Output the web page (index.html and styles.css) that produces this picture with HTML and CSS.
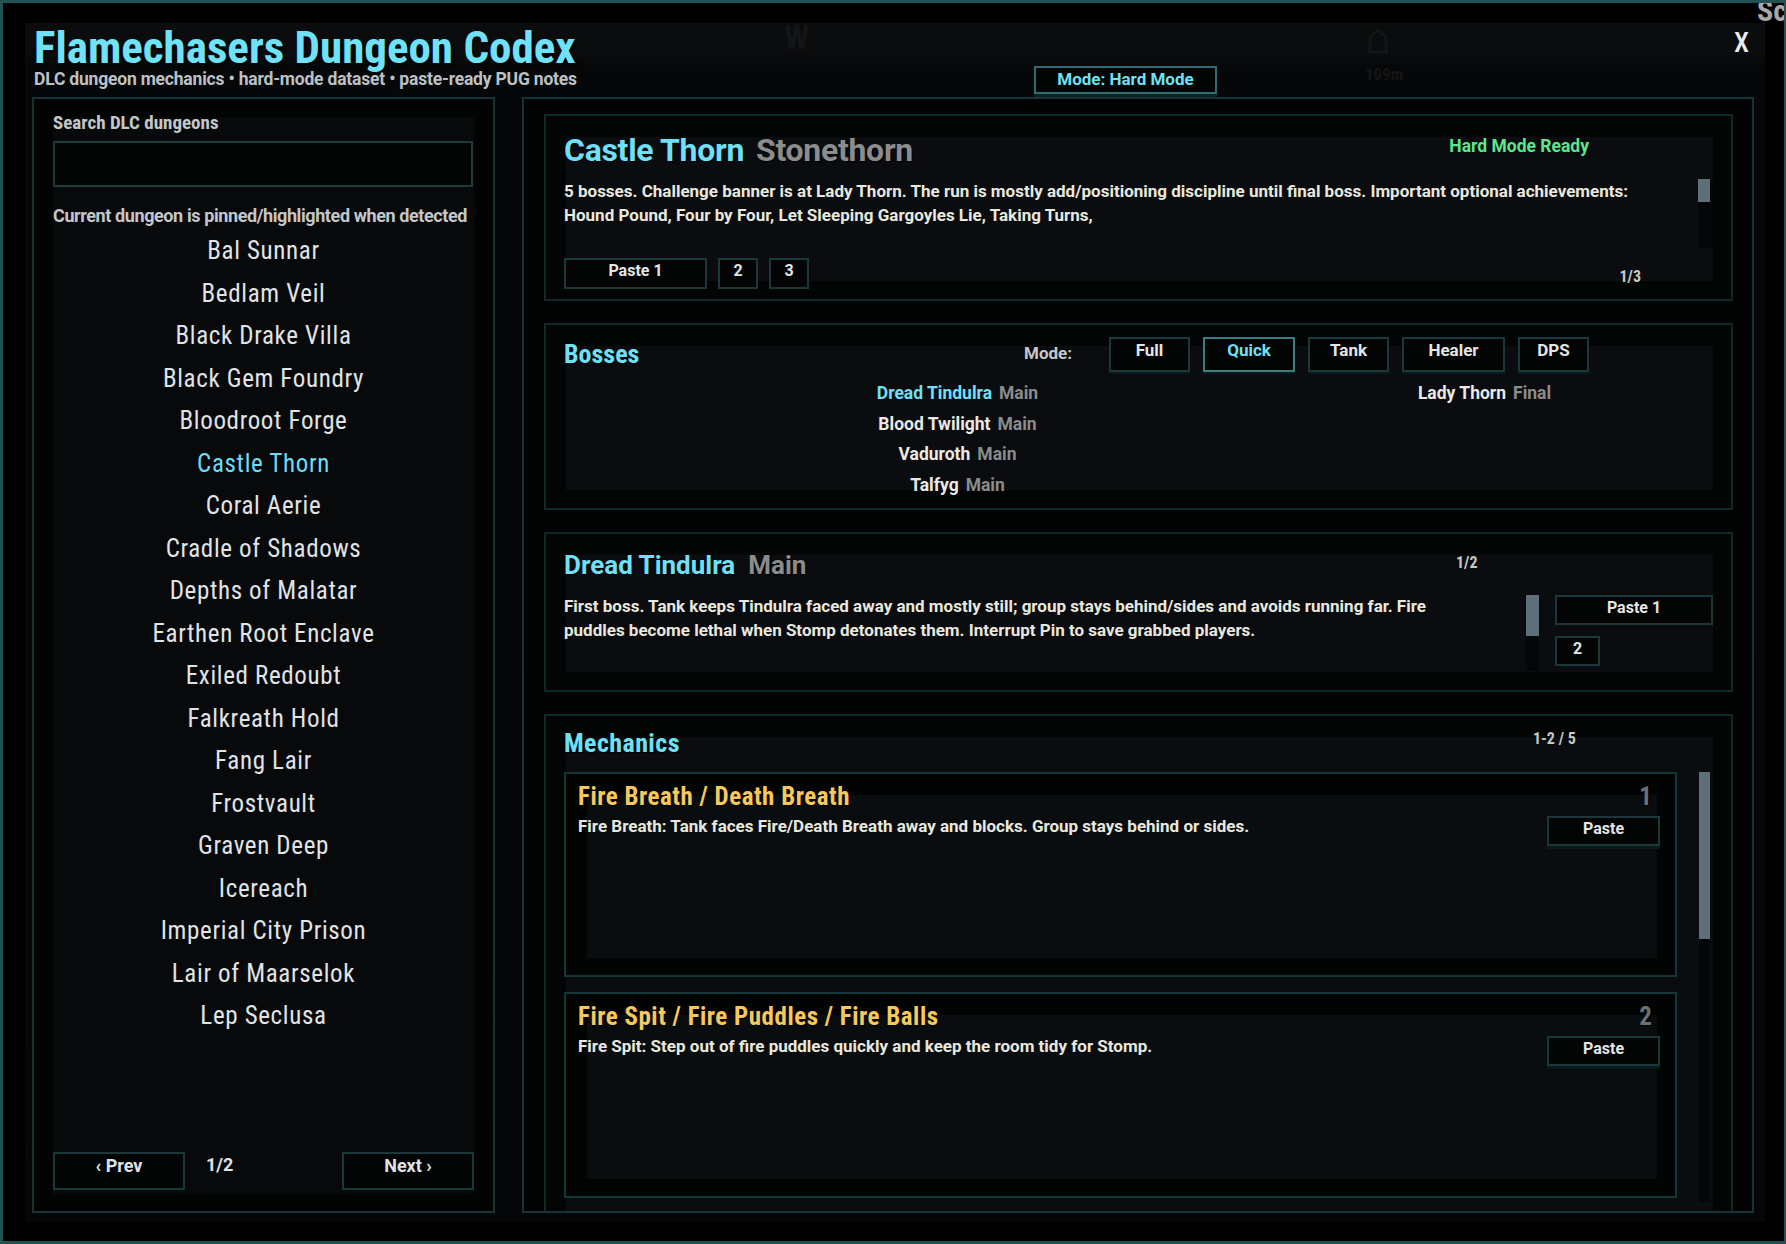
FILE: index.html
```html
<!DOCTYPE html>
<html lang="en">
<head>
<meta charset="utf-8">
<title>Flamechasers Dungeon Codex</title>
<link rel="stylesheet" href="styles.css">
</head>
<body>
<div class="window">
  <span class="corner-tag">Sc</span>
  <div class="frame">
    <span class="ghost ghost-w">W</span>
    <span class="ghost ghost-icon"><svg width="22" height="26" viewBox="0 0 22 26"><path d="M3 24V9l8-7 8 7v15z" fill="none" stroke="#131517" stroke-width="3"/></svg></span>
    <span class="ghost ghost-dist">109m</span>
    <header class="header">
      <div class="title-block">
        <h1 class="title">Flamechasers Dungeon Codex</h1>
        <p class="subtitle">DLC dungeon mechanics • hard-mode dataset • paste-ready PUG notes</p>
      </div>
      <div class="mode-cell"><button class="mode-btn">Mode: Hard Mode</button></div>
      <div class="close-cell"><button class="close-btn">X</button></div>
    </header>

    <main class="main">
      <aside class="left-panel">
        <div class="left-inner">
          <div class="search-label">Search DLC dungeons</div>
          <div class="search-input"></div>
          <div class="pin-note">Current dungeon is pinned/highlighted when detected</div>
          <ul class="dungeon-list">
            <li>Bal Sunnar</li>
            <li>Bedlam Veil</li>
            <li>Black Drake Villa</li>
            <li>Black Gem Foundry</li>
            <li>Bloodroot Forge</li>
            <li class="current">Castle Thorn</li>
            <li>Coral Aerie</li>
            <li>Cradle of Shadows</li>
            <li>Depths of Malatar</li>
            <li>Earthen Root Enclave</li>
            <li>Exiled Redoubt</li>
            <li>Falkreath Hold</li>
            <li>Fang Lair</li>
            <li>Frostvault</li>
            <li>Graven Deep</li>
            <li>Icereach</li>
            <li>Imperial City Prison</li>
            <li>Lair of Maarselok</li>
            <li>Lep Seclusa</li>
          </ul>
          <div class="pager">
            <button class="btn pager-btn">‹ Prev</button>
            <span class="pager-count">1/2</span>
            <button class="btn pager-btn next">Next ›</button>
          </div>
        </div>
      </aside>

      <section class="right-panel">
        <article class="card card-dungeon">
          <div class="dungeon-head">
            <h2 class="heading big"><span class="cyan">Castle Thorn</span><span class="muted">Stonethorn</span></h2>
            <span class="ready">Hard Mode Ready</span>
          </div>
          <div class="scroll-box dungeon-desc">
            <p class="desc">5 bosses. Challenge banner is at Lady Thorn. The run is mostly add/positioning discipline until final boss. Important optional achievements: Hound Pound, Four by Four, Let Sleeping Gargoyles Lie, Taking Turns,</p>
            <div class="track"><div class="thumb thumb-dungeon"></div></div>
          </div>
          <div class="paste-row">
            <button class="btn b-paste1">Paste 1</button>
            <button class="btn b-num">2</button>
            <button class="btn b-num">3</button>
            <span class="page-count">1/3</span>
          </div>
        </article>

        <article class="card card-bosses">
          <div class="bosses-head">
            <h2 class="heading narrow cyan">Bosses</h2>
            <span class="mode-label">Mode:</span>
            <div class="mode-tabs">
              <button class="btn tab w-full">Full</button>
              <button class="btn tab active w-quick">Quick</button>
              <button class="btn tab w-tank">Tank</button>
              <button class="btn tab w-healer">Healer</button>
              <button class="btn tab w-dps">DPS</button>
            </div>
          </div>
          <div class="boss-grid">
            <div class="boss-col">
              <div class="boss"><span class="boss-name cyan">Dread Tindulra</span><span class="boss-tag">Main</span></div>
              <div class="boss"><span class="boss-name">Blood Twilight</span><span class="boss-tag">Main</span></div>
              <div class="boss"><span class="boss-name">Vaduroth</span><span class="boss-tag">Main</span></div>
              <div class="boss"><span class="boss-name">Talfyg</span><span class="boss-tag">Main</span></div>
            </div>
            <div class="boss-col">
              <div class="boss"><span class="boss-name">Lady Thorn</span><span class="boss-tag">Final</span></div>
            </div>
          </div>
        </article>

        <article class="card card-boss">
          <div class="boss-head">
            <h2 class="heading wide"><span class="cyan">Dread Tindulra</span><span class="muted">Main</span></h2>
            <span class="page-count">1/2</span>
          </div>
          <div class="boss-body">
            <p class="desc boss-desc">First boss. Tank keeps Tindulra faced away and mostly still; group stays behind/sides and avoids running far. Fire puddles become lethal when Stomp detonates them. Interrupt Pin to save grabbed players.</p>
            <div class="track track-boss"><div class="thumb thumb-boss"></div></div>
            <div class="boss-btns">
              <button class="btn b-paste-wide">Paste 1</button>
              <button class="btn b-num2">2</button>
            </div>
          </div>
        </article>

        <article class="card card-mech">
          <div class="mech-head">
            <h2 class="heading mech-heading cyan">Mechanics</h2>
            <span class="page-count mech-count">1-2 / 5</span>
          </div>
          <div class="mech-area">
            <div class="mech-list">
              <div class="mech">
                <div class="mech-title-row">
                  <h3 class="mech-title">Fire Breath / Death Breath</h3>
                  <span class="mech-num">1</span>
                </div>
                <div class="mech-body">
                  <p class="desc">Fire Breath: Tank faces Fire/Death Breath away and blocks. Group stays behind or sides.</p>
                  <button class="btn b-paste">Paste</button>
                </div>
              </div>
              <div class="mech">
                <div class="mech-title-row">
                  <h3 class="mech-title">Fire Spit / Fire Puddles / Fire Balls</h3>
                  <span class="mech-num">2</span>
                </div>
                <div class="mech-body">
                  <p class="desc">Fire Spit: Step out of fire puddles quickly and keep the room tidy for Stomp.</p>
                  <button class="btn b-paste">Paste</button>
                </div>
              </div>
            </div>
            <div class="track track-mech"><div class="thumb thumb-mech"></div></div>
          </div>
        </article>
      </section>
    </main>
  </div>
</div>
</body>
</html>
```
FILE: styles.css
```css
* { box-sizing: border-box; }
html, body { margin: 0; padding: 0; background: #000; }
body {
  font-family: "Roboto", "Roboto Condensed", "Open Sans", sans-serif;
  font-stretch: 100%;
  color: #e6e6de;
  font-weight: 700;
}
button { font-family: inherit; font-stretch: inherit; font-weight: 700; cursor: pointer; margin: 0; }
h1, h2, h3, p, ul { margin: 0; padding: 0; }

.window {
  position: relative;
  width: 1786px;
  height: 1244px;
  border: 3px solid #235254;
  border-right-width: 2px;
  background: #000;
  padding: 20px 19px 19px 22px;
  overflow: hidden;
}
.corner-tag {
  position: absolute;
  top: -7px;
  right: -3px;
  font-size: 30px;
  font-stretch: 75%;
  color: #a6a8aa;
  line-height: 1;
}
.frame {
  position: relative;
  height: 100%;
  background: linear-gradient(#0b0c0d 0, #0b0c0d 27px, #060708 45px, #050607 100%);
  padding: 0 11px 0 7px;
  display: flex;
  flex-direction: column;
}
.ghost { position: absolute; color: #131517; line-height: 1; font-stretch: 75%; }
.ghost-w { left: 759px; top: -3px; font-size: 34px; }
.ghost-icon { left: 1342px; top: 5px; }
.ghost-dist { left: 1340px; top: 43px; font-size: 17px; }

/* header */
.header {
  position: relative;
  height: 74px;
  flex: none;
  display: grid;
  grid-template-columns: 1000px 183px 1fr;
  padding: 7px 5px 0 2px;
}
.title {
  font-size: 45px;
  line-height: 36px;
  font-stretch: 75%;
  color: #70e2f8;
  text-shadow: 2px 2px 2px #000;
  white-space: nowrap;
}
.subtitle {
  margin-top: 3px;
  font-size: 17.5px;
  line-height: 20px;
  font-stretch: 93%;
  letter-spacing: -0.2px;
  color: #bcc1c5;
  white-space: nowrap;
}
.mode-cell { padding-top: 36px; }
.mode-btn {
  width: 183px;
  height: 28px;
  background: #030404;
  border: 2px solid #2f6c6e;
  box-shadow: 0 3px 0 #0f2224;
  color: #6fe0f6;
  font-size: 17px;
  line-height: 20px;
  padding: 0 0 3px;
}
.close-cell { display: flex; justify-content: flex-end; align-items: flex-start; padding-top: 0; }
.close-btn {
  background: none;
  border: 0;
  color: #ececec;
  font-size: 27px;
  line-height: 26px;
  height: 26px;
  padding: 0;
  font-weight: 500;
  font-stretch: 75%;
}

/* main */
.main {
  display: flex;
  gap: 27px;
  height: 1116px;
  flex: none;
}

.left-panel {
  flex: 0 0 463px;
  min-width: 0;
  border: 2px solid #163435;
  background: #020303;
  padding: 18px 19px 17px 19px;
}
.left-inner {
  height: 100%;
  background: #08090b;
  display: flex;
  flex-direction: column;
}
.search-label {
  margin-top: -4px;
  font-size: 19px;
  line-height: 20px;
  font-stretch: 75%;
  color: #c3c7ca;
}
.search-input {
  margin-top: 8px;
  width: 420px;
  height: 46px;
  border: 2px solid #1a3a3c;
  background: #030404;
}
.pin-note {
  margin-top: 19px;
  font-size: 18px;
  line-height: 20px;
  font-stretch: 92.5%;
  letter-spacing: -0.4px;
  color: #c3c7ca;
  white-space: nowrap;
}
.dungeon-list {
  list-style: none;
  margin-top: 4px;
  text-align: center;
}
.dungeon-list li {
  font-size: 25px;
  line-height: 42.5px;
  font-weight: 400;
  font-stretch: 75%;
  color: #e0e4e6;
  letter-spacing: 0.65px;
}
.dungeon-list li.current { color: #6fdcf3; }
.pager {
  margin-top: auto;
  margin-bottom: 4px;
  display: flex;
  align-items: flex-start;
}
.btn {
  background: #030404;
  border: 2px solid #183839;
  color: #e4e6e6;
  padding: 0;
}
.pager-btn {
  width: 132px;
  height: 38px;
  font-size: 18px;
  line-height: 20px;
  font-stretch: 92%;
  padding-bottom: 10px;
  color: #dfe3e6;
}
.pager-count {
  margin-left: 21px;
  font-size: 18px;
  line-height: 26px;
  font-stretch: 90%;
  color: #dfe3e6;
}
.pager-btn.next { margin-left: auto; }

/* right panel */
.right-panel {
  flex: 0 0 1232px;
  min-width: 0;
  border: 2px solid #163435;
  background: #020303;
  padding: 15px 19px 0 20px;
  display: flex;
  flex-direction: column;
  gap: 22px;
  overflow: hidden;
}
.card {
  flex: none;
  border: 2px solid #112829;
  background:
    linear-gradient(#0a0c0f, #0a0c0f) no-repeat 20px 21px / calc(100% - 38px) calc(100% - 39px),
    #030404;
  padding: 0 18px 0 18px;
}
.cyan { color: #6fe0f6; }
.muted { color: #8b8c8c; }
.heading {
  display: flex;
  gap: 13px;
  font-size: 26px;
  line-height: 22px;
  white-space: nowrap;
  text-shadow: 1px 1px 1px #000;
}
.heading.big { font-size: 32px; line-height: 26px; font-stretch: 95%; letter-spacing: -0.3px; gap: 12px; }
.heading.narrow { font-stretch: 75%; }
.heading.mech-heading { font-stretch: 75%; letter-spacing: 0.4px; }
.heading.wide { font-stretch: 100%; }
.desc {
  font-size: 17px;
  line-height: 24px;
  font-stretch: 100%;
  color: #e8e8df;
}
.page-count {
  font-size: 16px;
  font-stretch: 75%;
  color: #c5c8c8;
}

/* card 1 */
.card-dungeon { height: 187px; padding-top: 21px; }
.dungeon-head { display: flex; align-items: flex-start; height: 26px; }
.ready {
  margin-left: auto;
  margin-right: 124px;
  margin-top: -1px;
  font-size: 17.5px;
  line-height: 20px;
  font-stretch: 95%;
  color: #5ee68c;
}
.scroll-box { display: flex; }
.dungeon-desc {
  margin-top: 16px;
  height: 69px;
  overflow: hidden;
}
.dungeon-desc .desc { flex: 1; padding-right: 40px; }
.track { background: #050607; flex: none; }
.dungeon-desc .track { width: 15px; height: 69px; }
.thumb { background: #5d6f79; }
.thumb-dungeon { width: 12px; height: 23px; }
.paste-row {
  margin-top: 10px;
  display: flex;
  align-items: flex-start;
  gap: 11px;
}
.paste-row .btn { height: 31px; font-size: 16px; line-height: 20px; padding-bottom: 5px; }
.b-paste1 { width: 143px; }
.b-num { width: 40px; }
.paste-row .page-count { margin-left: auto; margin-right: 72px; margin-top: 9px; line-height: 20px; }

/* card 2 */
.card-bosses { height: 187px; padding-top: 12px; }
.bosses-head {
  display: grid;
  grid-template-columns: 460px 85px 1fr;
  align-items: start;
}
.bosses-head .heading { margin-top: 6px; }
.mode-label { margin-top: 6px; font-size: 17px; line-height: 20px; font-stretch: 95%; color: #c5c8c8; }
.mode-tabs { display: flex; gap: 13px; }
.tab {
  height: 35px;
  font-size: 17px;
  line-height: 20px;
  padding-bottom: 10px;
  box-shadow: 0 2px 0 #0c1a1b;
}
.tab.active { border-color: #3a7e80; color: #6fe0f6; }
.w-full { width: 81px; }
.w-quick { width: 92px; }
.w-tank { width: 81px; }
.w-healer { width: 103px; }
.w-dps { width: 71px; }
.boss-grid {
  margin-top: 6px;
  margin-left: 130px;
  display: grid;
  grid-template-columns: 527px 527px;
}
.boss-col { display: flex; flex-direction: column; align-items: center; }
.boss {
  font-size: 17.5px;
  line-height: 30.7px;
  font-stretch: 100%;
  white-space: nowrap;
}
.boss-name { color: #eaeae4; }
.boss-name.cyan { color: #6fe0f6; }
.boss-tag { margin-left: 7px; color: #8b8c8c; }

/* card 3 */
.card-boss { height: 160px; padding-top: 20px; }
.boss-head {
  display: grid;
  grid-template-columns: 892px 1fr;
  align-items: start;
}
.boss-head .page-count { line-height: 20px; margin-top: -1px; }
.boss-body {
  margin-top: 18px;
  display: flex;
  align-items: flex-start;
}
.boss-desc { width: 962px; flex: none; padding-right: 50px; }
.track-boss { width: 13px; height: 76px; margin-top: 1px; }
.thumb-boss { width: 13px; height: 41px; }
.boss-btns {
  margin-left: 16px;
  margin-top: 1px;
  display: flex;
  flex-direction: column;
  gap: 11px;
  align-items: flex-start;
}
.b-paste-wide { width: 158px; height: 30px; font-size: 16px; line-height: 20px; padding-bottom: 4px; }
.b-num2 { width: 45px; height: 30px; font-size: 16px; line-height: 20px; padding-bottom: 4px; }

/* card 4 */
.card-mech { height: 560px; padding-top: 16px; }
.mech-head {
  display: grid;
  grid-template-columns: 969px 1fr;
  align-items: start;
}
.mech-count { margin-top: -3px; line-height: 20px; }
.mech-area {
  margin-top: 18px;
  display: flex;
  align-items: flex-start;
}
.mech-list {
  width: 1113px;
  flex: none;
  display: flex;
  flex-direction: column;
  gap: 15px;
}
.mech {
  height: 205px;
  border: 2px solid #133739;
  background:
    linear-gradient(#0a0d10, #0a0d10) no-repeat 21px 21px / calc(100% - 39px) calc(100% - 38px),
    #020303;
  padding: 12px 23px 0 12px;
}
.mech:nth-child(2) { height: 206px; }
.mech-title-row { display: flex; align-items: flex-start; }
.mech-title {
  font-size: 25px;
  line-height: 21px;
  font-stretch: 75%;
  letter-spacing: 0.5px;
  color: #f7c95c;
  text-shadow: 1px 1px 1px #000;
  white-space: nowrap;
}
.mech-num {
  margin-left: auto;
  font-size: 25px;
  line-height: 21px;
  font-stretch: 75%;
  color: #6b7176;
  text-shadow: 1px 1px 1px #000;
}
.mech-body {
  margin-top: 8px;
  display: flex;
  align-items: flex-start;
}
.mech-body .desc { flex: 1; line-height: 22px; }
.b-paste {
  width: 113px;
  height: 30px;
  margin-top: 1px;
  margin-right: -8px;
  font-size: 16px;
  line-height: 20px;
  padding-bottom: 5px;
  box-shadow: 0 3px 0 #0c1a1b;
}
.track-mech { margin-left: 22px; width: 11px; height: 430px; }
.thumb-mech { width: 11px; height: 167px; }
```
